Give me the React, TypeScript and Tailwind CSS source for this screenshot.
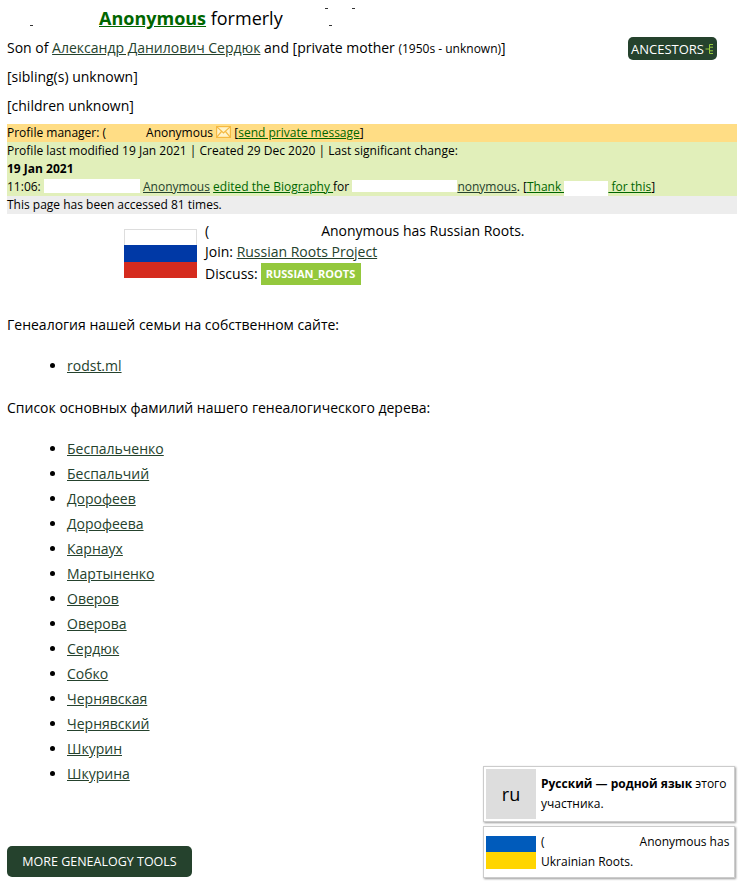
import React from "react";

const names = ["Беспальченко","Беспальчий","Дорофеев","Дорофеева","Карнаух","Мартыненко","Оверов","Оверова","Сердюк","Собко","Чернявская","Чернявский","Шкурин","Шкурина"];

const A = ({ children, green }: { children: React.ReactNode; green?: boolean }) => (
  <a href="#" className={green ? "text-[#006600] underline decoration-[#006600]" : "text-[#25422d] underline decoration-[#25422d]"}>{children}</a>
);

const Gap = ({ w, h = "h-[14px]" }: { w: string; h?: string }) => <span className={`inline-block ${w} ${h}`} />;

export default function App() {
  return (
    <div className="w-[741px] h-[884px] overflow-hidden bg-white pl-[7px] pr-[4px] text-[14px] leading-[20px] text-black font-['Open_Sans',sans-serif]">
      <div className="relative pl-[92px] pt-[6px] h-[34px] text-[18px] leading-[24px]">
        <span className="absolute left-[23px] top-[25px] w-[3px] h-[1px] bg-[#333333]" />
        <span className="absolute left-[318px] top-[8px] w-[3px] h-[1px] bg-[#333333]" />
        <span className="absolute left-[345px] top-[8px] w-[3px] h-[1px] bg-[#333333]" />
        <span className="absolute left-[322px] top-[25px] w-[3px] h-[1px] bg-[#333333]" />
        <a href="#" className="font-bold text-[#006600] underline">Anonymous</a> formerly
      </div>
      <div className="flex justify-between h-[24px] items-start pt-[4px] pr-[20px]">
        <div>
          Son of <A>Александр Данилович Сердюк</A> and [private mother <span className="text-[12px]">(1950s - unknown)</span>]
        </div>
        <a href="#" className="flex items-center gap-[1px] h-[23px] -mt-[1px] px-[3px] rounded-[5px] bg-[#25422d] text-white text-[13px]">
          ANCESTORS
          <svg width="9" height="12" viewBox="0 0 9 12" fill="none" stroke="#94c83d" strokeWidth="1"><path d="M8 1.5H4.5V10.5H8M4.5 6H0.5M8 4.2H4.5M8 7.8H4.5"/></svg>
        </a>
      </div>
      <div className="mt-[9px] h-[20px]">[sibling(s) unknown]</div>
      <div className="mt-[9px] h-[20px]">[children unknown]</div>
      <div className="mt-[8px] text-[12px] leading-[18px]">
        <div className="bg-[#ffdd85] h-[18px]">
          Profile manager: (<Gap w="w-[40px]" h="h-[1px]" />Anonymous{" "}
          <svg className="inline-block align-[-1px]" width="15" height="12" viewBox="0 0 15 12" fill="#fff3c8" stroke="#f5b942" strokeWidth="1.2"><rect x="0.6" y="0.6" width="13.8" height="10.8"/><path d="M0.6 0.6 7.5 7 14.4 0.6M0.6 11.4 5.5 5.5M14.4 11.4 9.5 5.5" fill="none"/></svg>{" "}
          [<A green>send private message</A>]
        </div>
        <div className="bg-[#e1efba]">
          <div className="h-[18px]">Profile last modified 19 Jan 2021 | Created 29 Dec 2020 | Last significant change:</div>
          <div className="h-[18px] font-bold">19 Jan 2021</div>
          <div className="h-[18px] whitespace-nowrap">
            11:06: <span className="inline-block w-[96px] h-[14px] bg-white align-[-2px]" /> <A>Anonymous</A> <A green>edited the Biography </A>for{" "}
            <span className="inline-block w-[105px] h-[12px] bg-white align-[-1px]" /><A>nonymous</A>. [<A green>Thank <span className="inline-block w-[44px] h-[15px] bg-white align-[-5px]" /> for this</A>]
          </div>
        </div>
        <div className="bg-[#ededed] h-[18px]">This page has been accessed 81 times.</div>
      </div>
      <div className="flex pl-[117px] mt-[6px] h-[70px]">
        <div className="w-[73px] h-[49px] mt-[9px] mr-[8px] flex flex-col shrink-0">
          <div className="h-[16px] bg-white border border-[#dddddd] border-b-0" />
          <div className="h-[17px] bg-[#0039a6]" />
          <div className="h-[16px] bg-[#d52b1e]" />
        </div>
        <div className="leading-[21px]">
          <div>(<Gap w="w-[112px]" h="h-[1px]" />Anonymous has Russian Roots.</div>
          <div>Join: <A>Russian Roots Project</A></div>
          <div className="flex items-center gap-[3px] -mt-[1px]">
            Discuss:
            <span className="mt-[2px] bg-[#94c83d] text-white font-bold text-[11px] leading-[22px] h-[22px] pl-[5px] pr-[6px]">RUSSIAN_ROOTS</span>
          </div>
        </div>
      </div>
      <div className="flex justify-between items-end mt-[25px]">
        <div className="w-[470px] shrink-0">
          <p className="whitespace-nowrap h-[20px]">Генеалогия нашей семьи на собственном сайте:</p>
          <ul className="list-disc pl-[60px] mt-[21px]">
            <li><A>rodst.ml</A></li>
          </ul>
          <p className="whitespace-nowrap mt-[22px] h-[20px]">Список основных фамилий нашего генеалогического дерева:</p>
          <ul className="list-disc pl-[60px] mt-[18px]">
            {names.map((n) => (
              <li key={n} className="h-[25px] leading-[25px]"><A>{n}</A></li>
            ))}
          </ul>
          <a href="#" className="mt-[60px] flex w-[185px] h-[31px] items-center justify-center rounded-[5px] bg-[#25422d] text-white text-[12.5px]">MORE GENEALOGY TOOLS</a>
        </div>
        <div className="w-[252px] shrink-0 mr-[2px] -mb-[1px] text-[12px] leading-[20px]">
          <div className="flex items-center gap-[5px] h-[56px] bg-white border border-[#cccccc] shadow-[1px_1px_2px_rgba(0,0,0,0.4)] pl-[2px] pr-[2px]">
            <div className="w-[50px] h-[50px] bg-[#dddddd] shrink-0 flex items-center justify-center text-[18px]">ru</div>
            <div><b>Русский — родной язык</b> этого участника.</div>
          </div>
          <div className="flex items-center gap-[5px] h-[52px] mt-[4px] bg-white border border-[#cccccc] shadow-[1px_1px_2px_rgba(0,0,0,0.4)] pl-[2px] pr-[2px]">
            <div className="w-[50px] h-[33px] shrink-0 flex flex-col">
              <div className="h-[16px] bg-[#005bbb]" />
              <div className="h-[17px] bg-[#ffd500]" />
            </div>
            <div>(<Gap w="w-[95px]" h="h-[1px]" />Anonymous has Ukrainian Roots.</div>
          </div>
        </div>
      </div>
    </div>
  );
}
